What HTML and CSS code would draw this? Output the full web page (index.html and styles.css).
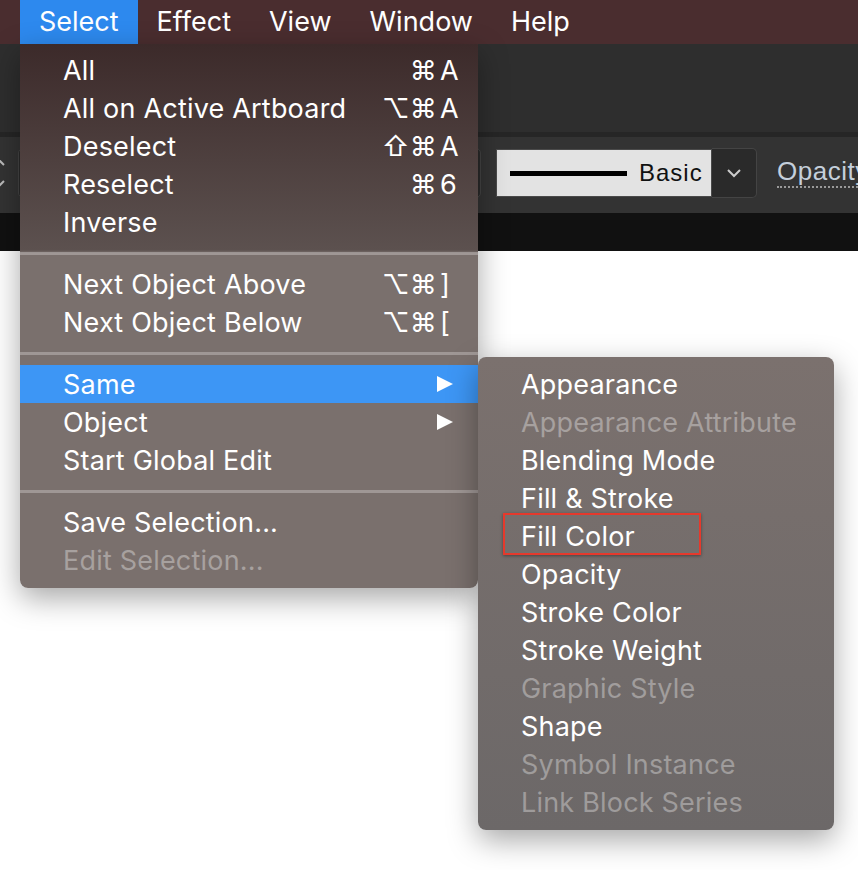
FILE: index.html
```html
<!DOCTYPE html>
<html>
<head>
    <title>Select menu</title>
    <link rel="stylesheet" href="styles.css">
</head>
<body>
    <div class="screen">
        <header class="menubar">
            <span class="menubar-item active">Select</span>
            <span class="menubar-item">Effect</span>
            <span class="menubar-item">View</span>
            <span class="menubar-item">Window</span>
            <span class="menubar-item">Help</span>
        </header>

        <div class="toolbar">
            <div class="toolbar-top"></div>
            <div class="toolbar-edge"></div>
            <div class="control-bar">
                <div class="stepper">
                    <svg width="14" height="40" viewBox="0 0 14 40">
                        <polyline points="-6,2 4,12" fill="none" stroke="#bbb" stroke-width="2"/>
                        <polyline points="4,28 -6,38" fill="none" stroke="#bbb" stroke-width="2"/>
                    </svg>
                </div>
                <div class="field"></div>
                <div class="stroke-style">
                    <span class="stroke-line"></span>
                    <span class="stroke-name">Basic</span>
                </div>
                <div class="dropdown">
                    <svg width="16" height="10" viewBox="0 0 16 10">
                        <polyline points="2,2 8,8 14,2" fill="none" stroke="#ccc" stroke-width="2"/>
                    </svg>
                </div>
                <span class="opacity-link">Opacity</span>
            </div>
            <div class="tab-strip"></div>
        </div>

        <main class="canvas"></main>

        <div class="menu main-menu">
            <div class="menu-item"><span class="label">All</span><span class="mods">⌘</span><span class="key">A</span></div>
            <div class="menu-item"><span class="label">All on Active Artboard</span><span class="mods">⌥⌘</span><span class="key">A</span></div>
            <div class="menu-item"><span class="label">Deselect</span><span class="mods">⇧⌘</span><span class="key">A</span></div>
            <div class="menu-item"><span class="label">Reselect</span><span class="mods">⌘</span><span class="key">6</span></div>
            <div class="menu-item"><span class="label">Inverse</span></div>
            <div class="separator"></div>
            <div class="menu-item"><span class="label">Next Object Above</span><span class="mods">⌥⌘</span><span class="key">]</span></div>
            <div class="menu-item"><span class="label">Next Object Below</span><span class="mods">⌥⌘</span><span class="key">[</span></div>
            <div class="separator"></div>
            <div class="menu-item active">
                <span class="label">Same</span>
                <svg class="arrow" width="16" height="16" viewBox="0 0 16 16"><polygon points="0,0 16,8 0,16" fill="#fff"/></svg>
            </div>
            <div class="menu-item">
                <span class="label">Object</span>
                <svg class="arrow" width="16" height="16" viewBox="0 0 16 16"><polygon points="0,0 16,8 0,16" fill="#fff"/></svg>
            </div>
            <div class="menu-item"><span class="label">Start Global Edit</span></div>
            <div class="separator"></div>
            <div class="menu-item"><span class="label">Save Selection...</span></div>
            <div class="menu-item disabled"><span class="label">Edit Selection...</span></div>
        </div>

        <div class="menu submenu">
            <div class="menu-item"><span class="label">Appearance</span></div>
            <div class="menu-item disabled"><span class="label">Appearance Attribute</span></div>
            <div class="menu-item"><span class="label">Blending Mode</span></div>
            <div class="menu-item"><span class="label">Fill &amp; Stroke</span></div>
            <div class="menu-item marked"><span class="label">Fill Color</span><span class="mark"></span></div>
            <div class="menu-item"><span class="label">Opacity</span></div>
            <div class="menu-item"><span class="label">Stroke Color</span></div>
            <div class="menu-item"><span class="label">Stroke Weight</span></div>
            <div class="menu-item disabled"><span class="label">Graphic Style</span></div>
            <div class="menu-item"><span class="label">Shape</span></div>
            <div class="menu-item disabled"><span class="label">Symbol Instance</span></div>
            <div class="menu-item disabled"><span class="label">Link Block Series</span></div>
        </div>
    </div>
</body>
</html>
```

FILE: styles.css
```css
body {
    margin: 0;
    font-family: 'Inter', 'DejaVu Sans', sans-serif;
    background-color: #fff;
}

.screen {
    position: relative;
    width: 858px;
    height: 870px;
    overflow: hidden;
    display: flex;
    flex-direction: column;
}

/* top menu bar */
.menubar {
    display: flex;
    height: 44px;
    padding-left: 20px;
    background-color: #4a2d2f;
    flex-shrink: 0;
}

.menubar-item {
    padding: 0 19px;
    line-height: 44px;
    font-size: 27px;
    color: #fff;
}

.menubar-item.active {
    background-color: #2d89ee;
}

/* app toolbar */
.toolbar {
    flex-shrink: 0;
}

.toolbar-top {
    height: 88px;
    background-color: #2e2e2e;
}

.toolbar-edge {
    height: 5px;
    background-color: #262626;
}

.control-bar {
    display: flex;
    align-items: flex-start;
    height: 76px;
    padding-top: 11px;
    box-sizing: border-box;
    background-color: #333;
    overflow: hidden;
    white-space: nowrap;
}

.control-bar > * {
    flex-shrink: 0;
}

.stepper {
    width: 18px;
    height: 50px;
    display: flex;
    align-items: center;
}

.field {
    width: 463px;
    height: 50px;
    box-sizing: border-box;
    border: 1px solid #444;
    border-radius: 5px;
    background-color: #2a2a2a;
    margin-right: 15px;
}

.stroke-style {
    display: flex;
    align-items: center;
    width: 216px;
    height: 48px;
    margin-top: 1px;
    box-sizing: border-box;
    padding-left: 13px;
    background-color: #e3e3e3;
    border: 1px solid #4a4a4a;
}

.stroke-line {
    width: 117px;
    height: 5px;
    background-color: #000;
}

.stroke-name {
    margin-left: 12px;
    font-family: 'Liberation Sans', sans-serif;
    font-size: 24px;
    letter-spacing: 1px;
    color: #111;
}

.dropdown {
    display: flex;
    align-items: center;
    justify-content: center;
    width: 45px;
    height: 50px;
    box-sizing: border-box;
    border: 1px solid #444;
    border-left: none;
    border-radius: 0 5px 5px 0;
    background-color: #2a2a2a;
}

.opacity-link {
    margin-left: 20px;
    margin-top: 9px;
    font-family: 'Liberation Sans', sans-serif;
    font-size: 26px;
    letter-spacing: 0.5px;
    color: #c4cfdb;
    border-bottom: 2px dotted #9a9a9a;
    line-height: 29px;
}

.tab-strip {
    height: 38px;
    background-color: #111;
}

.canvas {
    flex: 1;
    background-color: #fff;
}

/* dropdown menus */
.menu {
    position: absolute;
    color: #fff;
    font-size: 27px;
    letter-spacing: 0.2px;
    box-shadow: 0 10px 30px rgba(0, 0, 0, 0.35);
}

.main-menu {
    left: 20px;
    top: 44px;
    width: 458px;
    padding: 7px 0 9px;
    border-radius: 0 0 8px 8px;
    background: linear-gradient(to bottom, #3c2a2a 0px, #5c514f 206px, #7a706d 209px, #7a706d 100%);
}

.submenu {
    left: 478px;
    top: 357px;
    width: 356px;
    padding: 8px 0 9px;
    border-radius: 8px;
    background: linear-gradient(to bottom, #7b716e, #6c6868);
}

.menu-item {
    position: relative;
    display: flex;
    align-items: center;
    height: 38px;
    padding: 0 18px 0 43px;
    white-space: nowrap;
}

.menu-item .label {
    flex: 1;
}

.menu-item .mods {
    margin-right: 3px;
    text-align: right;
}

.menu-item .key {
    width: 20px;
}

.menu-item .arrow {
    margin-right: 7px;
}

.menu-item.active {
    background-color: #3d96f5;
}

.menu-item.disabled {
    color: rgba(255, 255, 255, 0.35);
}

.separator {
    display: flex;
    align-items: center;
    height: 24px;
}

.separator::after {
    content: "";
    width: 100%;
    height: 3px;
    background-color: rgba(255, 255, 255, 0.28);
}

.mark {
    position: absolute;
    left: 25px;
    top: -4px;
    width: 198px;
    height: 42px;
    box-sizing: border-box;
    border: 2px solid #e5392c;
    box-shadow: 0 1px 3px rgba(0, 0, 0, 0.4);
}
```
